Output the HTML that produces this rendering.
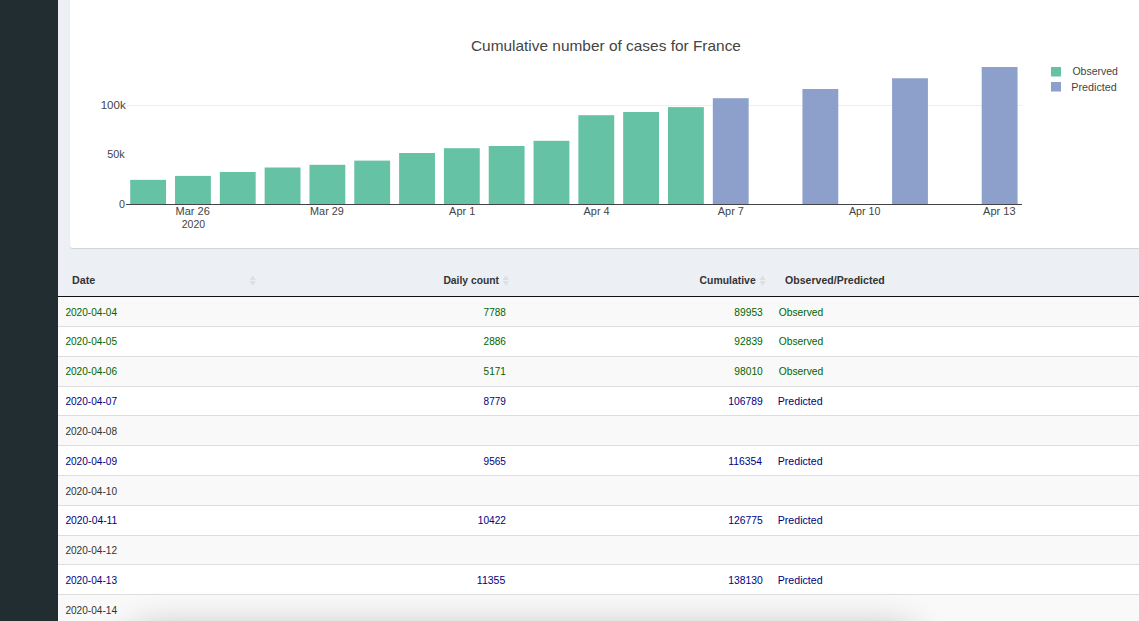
<!DOCTYPE html>
<html><head><meta charset="utf-8">
<style>
html,body{margin:0;padding:0;}
body{width:1139px;height:621px;overflow:hidden;position:relative;background:#ecf0f5;font-family:"Liberation Sans",sans-serif;}
svg text{font-family:"Liberation Sans",sans-serif;}
#side{position:absolute;left:0;top:0;width:58px;height:621px;background:#222d32;}
#card{position:absolute;left:70px;top:-4px;width:1080px;height:252px;background:#fff;border-radius:3px;box-shadow:0 1px 1px rgba(0,0,0,0.12);}
#shadow{position:absolute;left:128px;top:634px;width:790px;height:60px;border-radius:30px;box-shadow:0 0 34px 10px rgba(0,0,0,0.2);}
</style></head><body>
<div id="side"></div>
<div id="card"></div>
<svg style="position:absolute;left:0;top:0" width="1139" height="621">
<rect x="126" y="105" width="896" height="1" fill="#eee"/>
<g fill="#66c2a5"><rect x="130.20" y="179.86" width="35.85" height="24.14"/><rect x="175.02" y="175.90" width="35.85" height="28.10"/><rect x="219.83" y="172.00" width="35.85" height="32.00"/><rect x="264.65" y="167.50" width="35.85" height="36.50"/><rect x="309.46" y="164.80" width="35.85" height="39.20"/><rect x="354.28" y="160.60" width="35.85" height="43.40"/><rect x="399.10" y="153.00" width="35.85" height="51.00"/><rect x="443.91" y="148.20" width="35.85" height="55.80"/><rect x="488.73" y="146.00" width="35.85" height="58.00"/><rect x="533.54" y="140.80" width="35.85" height="63.20"/><rect x="578.36" y="115.20" width="35.85" height="88.80"/><rect x="623.18" y="112.00" width="35.85" height="92.00"/><rect x="667.99" y="107.10" width="35.85" height="96.90"/></g>
<g fill="#8da0cb"><rect x="712.81" y="98.20" width="35.85" height="105.80"/><rect x="802.44" y="89.00" width="35.85" height="115.00"/><rect x="892.07" y="78.25" width="35.85" height="125.75"/><rect x="981.70" y="67.00" width="35.85" height="137.00"/></g>
<rect x="126" y="204" width="896" height="1" fill="#444"/>
<rect x="1051" y="67" width="10" height="9.5" fill="#66c2a5"/>
<rect x="1051" y="82" width="10" height="9.5" fill="#8da0cb"/>
<rect x="58" y="297" width="1081" height="29" fill="#f9f9f9"/><rect x="58" y="327" width="1081" height="29" fill="#fff"/><rect x="58" y="326" width="1081" height="1" fill="#ddd"/><rect x="58" y="357" width="1081" height="29" fill="#f9f9f9"/><rect x="58" y="356" width="1081" height="1" fill="#ddd"/><rect x="58" y="387" width="1081" height="28" fill="#fff"/><rect x="58" y="386" width="1081" height="1" fill="#ddd"/><rect x="58" y="416" width="1081" height="29" fill="#f9f9f9"/><rect x="58" y="415" width="1081" height="1" fill="#ddd"/><rect x="58" y="446" width="1081" height="29" fill="#fff"/><rect x="58" y="445" width="1081" height="1" fill="#ddd"/><rect x="58" y="476" width="1081" height="29" fill="#f9f9f9"/><rect x="58" y="475" width="1081" height="1" fill="#ddd"/><rect x="58" y="506" width="1081" height="29" fill="#fff"/><rect x="58" y="505" width="1081" height="1" fill="#ddd"/><rect x="58" y="536" width="1081" height="28" fill="#f9f9f9"/><rect x="58" y="535" width="1081" height="1" fill="#ddd"/><rect x="58" y="565" width="1081" height="29" fill="#fff"/><rect x="58" y="564" width="1081" height="1" fill="#ddd"/><rect x="58" y="595" width="1081" height="29" fill="#f9f9f9"/><rect x="58" y="594" width="1081" height="1" fill="#ddd"/>
<rect x="58" y="296" width="1081" height="1" fill="#111"/>
<path d="M252.75 275.2 L255.90 280.09999999999997 L249.6 280.09999999999997 Z M252.75 285.9 L255.90 281.0 L249.6 281.0 Z" fill="#dedfe2"/><path d="M505.95 275.2 L509.10 280.09999999999997 L502.8 280.09999999999997 Z M505.95 285.9 L509.10 281.0 L502.8 281.0 Z" fill="#dedfe2"/><path d="M762.65 275.2 L765.80 280.09999999999997 L759.5 280.09999999999997 Z M762.65 285.9 L765.80 281.0 L759.5 281.0 Z" fill="#dedfe2"/>
<text id="t0" x="470.94" y="50.50" font-size="14.5" textLength="269.98" lengthAdjust="spacingAndGlyphs" fill="#444">Cumulative number of cases for France</text>
<text id="t1" x="100.65" y="109.00" font-size="10.5" textLength="25.02" lengthAdjust="spacingAndGlyphs" fill="#444">100k</text>
<text id="t2" x="107.18" y="158.10" font-size="10.5" textLength="17.52" lengthAdjust="spacingAndGlyphs" fill="#444">50k</text>
<text id="t3" x="118.94" y="207.90" font-size="10.5" textLength="5.95" lengthAdjust="spacingAndGlyphs" fill="#444">0</text>
<text id="t4" x="175.56" y="215.00" font-size="10.5" textLength="34.28" lengthAdjust="spacingAndGlyphs" fill="#444">Mar 26</text>
<text id="t5" x="310.09" y="215.00" font-size="10.5" textLength="33.75" lengthAdjust="spacingAndGlyphs" fill="#444">Mar 29</text>
<text id="t6" x="449.14" y="215.00" font-size="10.5" textLength="26.13" lengthAdjust="spacingAndGlyphs" fill="#444">Apr 1</text>
<text id="t7" x="583.55" y="215.00" font-size="10.5" textLength="26.13" lengthAdjust="spacingAndGlyphs" fill="#444">Apr 4</text>
<text id="t8" x="717.77" y="215.00" font-size="10.5" textLength="26.13" lengthAdjust="spacingAndGlyphs" fill="#444">Apr 7</text>
<text id="t9" x="848.91" y="215.00" font-size="10.5" textLength="31.46" lengthAdjust="spacingAndGlyphs" fill="#444">Apr 10</text>
<text id="t10" x="983.08" y="215.00" font-size="10.5" textLength="32.50" lengthAdjust="spacingAndGlyphs" fill="#444">Apr 13</text>
<text id="t11" x="181.77" y="228.00" font-size="10.5" textLength="23.40" lengthAdjust="spacingAndGlyphs" fill="#444">2020</text>
<text id="t12" x="1072.39" y="75.00" font-size="10.5" textLength="45.54" lengthAdjust="spacingAndGlyphs" fill="#444">Observed</text>
<text id="t13" x="1071.37" y="91.00" font-size="10.5" textLength="45.40" lengthAdjust="spacingAndGlyphs" fill="#444">Predicted</text>
<text id="t14" x="71.97" y="283.90" font-size="10.5" textLength="23.30" lengthAdjust="spacingAndGlyphs" font-weight="bold" fill="#333">Date</text>
<text id="t15" x="443.42" y="283.90" font-size="10.5" textLength="55.60" lengthAdjust="spacingAndGlyphs" font-weight="bold" fill="#333">Daily count</text>
<text id="t16" x="699.59" y="283.90" font-size="10.5" textLength="56.11" lengthAdjust="spacingAndGlyphs" font-weight="bold" fill="#333">Cumulative</text>
<text id="t17" x="785.00" y="283.90" font-size="10.5" textLength="99.74" lengthAdjust="spacingAndGlyphs" font-weight="bold" fill="#333">Observed/Predicted</text>
<text id="t18" x="65.40" y="316.00" font-size="10" textLength="51.66" lengthAdjust="spacingAndGlyphs" fill="#006400">2020-04-04</text>
<text id="t19" x="483.58" y="316.00" font-size="10" textLength="22.27" lengthAdjust="spacingAndGlyphs" fill="#006400">7788</text>
<text id="t20" x="734.39" y="316.00" font-size="10" textLength="28.36" lengthAdjust="spacingAndGlyphs" fill="#006400">89953</text>
<text id="t21" x="778.79" y="316.00" font-size="10" textLength="44.37" lengthAdjust="spacingAndGlyphs" fill="#006400">Observed</text>
<text id="t22" x="65.40" y="345.00" font-size="10" textLength="51.66" lengthAdjust="spacingAndGlyphs" fill="#006400">2020-04-05</text>
<text id="t23" x="483.58" y="345.00" font-size="10" textLength="22.27" lengthAdjust="spacingAndGlyphs" fill="#006400">2886</text>
<text id="t24" x="734.39" y="345.00" font-size="10" textLength="28.36" lengthAdjust="spacingAndGlyphs" fill="#006400">92839</text>
<text id="t25" x="778.79" y="345.00" font-size="10" textLength="44.37" lengthAdjust="spacingAndGlyphs" fill="#006400">Observed</text>
<text id="t26" x="65.40" y="375.00" font-size="10" textLength="51.66" lengthAdjust="spacingAndGlyphs" fill="#006400">2020-04-06</text>
<text id="t27" x="483.60" y="375.00" font-size="10" textLength="22.27" lengthAdjust="spacingAndGlyphs" fill="#006400">5171</text>
<text id="t28" x="734.39" y="375.00" font-size="10" textLength="28.36" lengthAdjust="spacingAndGlyphs" fill="#006400">98010</text>
<text id="t29" x="778.79" y="375.00" font-size="10" textLength="44.37" lengthAdjust="spacingAndGlyphs" fill="#006400">Observed</text>
<text id="t30" x="65.40" y="405.00" font-size="10" textLength="51.66" lengthAdjust="spacingAndGlyphs" fill="#000080">2020-04-07</text>
<text id="t31" x="483.58" y="405.00" font-size="10" textLength="22.27" lengthAdjust="spacingAndGlyphs" fill="#000080">8779</text>
<text id="t32" x="728.36" y="405.00" font-size="10" textLength="34.45" lengthAdjust="spacingAndGlyphs" fill="#000080">106789</text>
<text id="t33" x="777.78" y="405.00" font-size="10" textLength="44.79" lengthAdjust="spacingAndGlyphs" fill="#000080">Predicted</text>
<text id="t34" x="65.40" y="435.00" font-size="10" textLength="51.66" lengthAdjust="spacingAndGlyphs" fill="#333">2020-04-08</text>
<text id="t35" x="65.40" y="465.00" font-size="10" textLength="51.66" lengthAdjust="spacingAndGlyphs" fill="#000080">2020-04-09</text>
<text id="t36" x="483.56" y="465.00" font-size="10" textLength="22.33" lengthAdjust="spacingAndGlyphs" fill="#000080">9565</text>
<text id="t37" x="728.37" y="465.00" font-size="10" textLength="33.69" lengthAdjust="spacingAndGlyphs" fill="#000080">116354</text>
<text id="t38" x="777.78" y="465.00" font-size="10" textLength="44.79" lengthAdjust="spacingAndGlyphs" fill="#000080">Predicted</text>
<text id="t39" x="65.40" y="495.00" font-size="10" textLength="51.66" lengthAdjust="spacingAndGlyphs" fill="#333">2020-04-10</text>
<text id="t40" x="65.40" y="524.00" font-size="10" textLength="51.93" lengthAdjust="spacingAndGlyphs" fill="#000080">2020-04-11</text>
<text id="t41" x="477.89" y="524.00" font-size="10" textLength="28.08" lengthAdjust="spacingAndGlyphs" fill="#000080">10422</text>
<text id="t42" x="728.36" y="524.00" font-size="10" textLength="34.45" lengthAdjust="spacingAndGlyphs" fill="#000080">126775</text>
<text id="t43" x="777.78" y="524.00" font-size="10" textLength="44.79" lengthAdjust="spacingAndGlyphs" fill="#000080">Predicted</text>
<text id="t44" x="65.40" y="554.00" font-size="10" textLength="51.66" lengthAdjust="spacingAndGlyphs" fill="#333">2020-04-12</text>
<text id="t45" x="65.40" y="584.00" font-size="10" textLength="51.66" lengthAdjust="spacingAndGlyphs" fill="#000080">2020-04-13</text>
<text id="t46" x="476.85" y="584.00" font-size="10" textLength="28.39" lengthAdjust="spacingAndGlyphs" fill="#000080">11355</text>
<text id="t47" x="728.36" y="584.00" font-size="10" textLength="34.45" lengthAdjust="spacingAndGlyphs" fill="#000080">138130</text>
<text id="t48" x="777.78" y="584.00" font-size="10" textLength="44.79" lengthAdjust="spacingAndGlyphs" fill="#000080">Predicted</text>
<text id="t49" x="65.40" y="614.00" font-size="10" textLength="51.66" lengthAdjust="spacingAndGlyphs" fill="#333">2020-04-14</text>
</svg>
<div id="shadow"></div>
</body></html>
